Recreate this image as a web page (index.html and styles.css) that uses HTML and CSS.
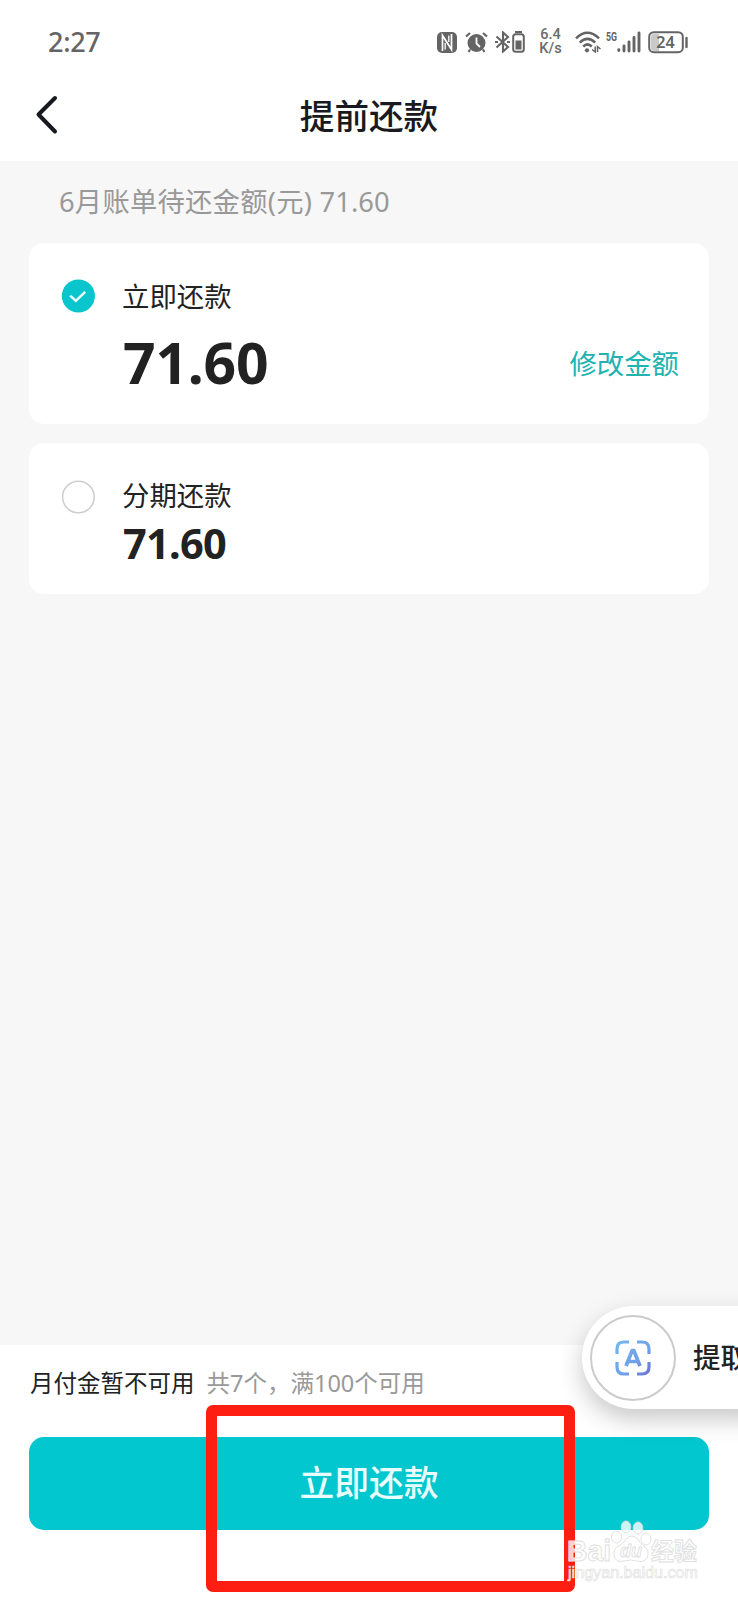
FILE: index.html
```html
<!DOCTYPE html>
<html lang="zh-CN">
<head>
<meta charset="utf-8">
<title>提前还款</title>
<link rel="stylesheet" href="styles.css">
</head>
<body>
<div class="screen">
  <div class="status">
    <span class="clock">2:27</span>
    <div class="indicators">
      <svg class="i-nfc" width="20" height="21" viewBox="0 0 20 21"><rect width="20" height="21" rx="5" fill="#646464"/><path d="M5.500 19V3.500L14.500 17.500V2" fill="none" stroke="#fff" stroke-width="1.700"/><path d="M8.200 17.500V11M11.800 3.500V10" stroke="#fff" stroke-width="1.300"/></svg>
      <svg class="i-alarm" width="23" height="21" viewBox="0 0 23 21"><circle cx="11.5" cy="11" r="9" fill="#646464"/><path d="M1 4.5L5 1M22 4.5L18 1M5 17.5L3.5 20M18 17.5L19.5 20" stroke="#646464" stroke-width="2.2"/><path d="M11.5 5.5V11.5L15 15" fill="none" stroke="#fff" stroke-width="1.8"/></svg>
      <svg class="i-bt" width="31" height="22" viewBox="0 0 31 22"><path d="M1.5 5.5L13 16L8 20.5V1.5L13 6L1.5 16.5" fill="none" stroke="#646464" stroke-width="2.100"/><path d="M0 11h3M12 11h3" stroke="#646464" stroke-width="2"/><rect x="18.2" y="3.2" width="10.600" height="17.500" rx="2.500" fill="none" stroke="#646464" stroke-width="2"/><path d="M20 1h7" stroke="#646464" stroke-width="2"/><rect x="20.5" y="9.5" width="6" height="9" fill="#646464"/></svg>
      <div class="speed"><span>6.4</span><span>K/s</span></div>
      <svg class="i-wifi" width="27" height="22" viewBox="0 0 27 22"><g fill="none" stroke="#646464" stroke-width="2.5"><path d="M1 7.3Q12.5-3.8 24 7.3"/><path d="M4.8 11.6Q12.5 4.2 20.2 11.6"/><path d="M8.2 15.5Q12.5 11.3 16.8 15.5"/></g><circle cx="12" cy="19.3" r="2.1" fill="#646464"/><path d="M20.2 15.5v5.5l-3-2.5M22.5 21v-5.5l3 2.5" fill="none" stroke="#646464" stroke-width="1.5"/></svg>
      <svg class="i-cell" width="35" height="22" viewBox="0 0 35 22"><text class="fiveg" x="0" y="9.5" textLength="11" lengthAdjust="spacingAndGlyphs">5G</text><path d="M12.8 18.600v1M18 15v5M23 11v9M28 6.5v13.5M33 2v18" stroke="#646464" stroke-width="2.9" stroke-linecap="round"/></svg>
      <svg class="i-batt" width="41" height="23" viewBox="0 0 41 23"><path d="M6 3h5v17H6Q3 20 3 17V6Q3 3 6 3Z" fill="#c9c9c9"/><rect x="1.2" y="1.2" width="33.6" height="20" rx="4.5" fill="none" stroke="#646464" stroke-width="2"/><path d="M38.5 7v9" stroke="#646464" stroke-width="2.4" stroke-linecap="round"/><text class="pct" x="8.2" y="17" textLength="18.500" lengthAdjust="spacingAndGlyphs">24</text></svg>
    </div>
  </div>
  <div class="titlebar">
    <svg class="back" width="24" height="40" viewBox="0 0 24 40"><path d="M21 3L4.500 19.5L21 36.5" fill="none" stroke="#171820" stroke-width="4" stroke-linecap="round" stroke-linejoin="round"/></svg>
    <h1 class="title">提前还款</h1>
  </div>
  <main class="content">
    <p class="summary">6月账单待还金额(元) <span class="sum-num">71.60</span></p>
    <section class="card card-now">
      <svg class="radio" width="34" height="34" viewBox="0 0 34 34"><circle cx="17.400" cy="17" r="16.600" fill="#0ac5cb"/><path d="M9.2 16.7L14.8 21.8L24.2 12.8" fill="none" stroke="#e9ffff" stroke-width="2.5"/></svg>
      <div class="plan">
        <span class="label">立即还款</span>
        <span class="amount big">71.60</span>
      </div>
      <a class="edit">修改金额</a>
    </section>
    <section class="card card-split">
      <svg class="radio" width="34" height="34" viewBox="0 0 34 34"><circle cx="17.400" cy="17" r="15.800" fill="#fff" stroke="#ccc" stroke-width="1.5"/></svg>
      <div class="plan">
        <span class="label">分期还款</span>
        <span class="amount small">71.60</span>
      </div>
    </section>
  </main>
  <footer class="footer">
    <p class="coupon"><span>月付金暂不可用</span><span class="hint">共7个，满100个可用</span></p>
    <button class="pay">立即还款</button>
  </footer>

  <div class="floating">
    <div class="scan">
      <svg width="36" height="36" viewBox="0 0 36 36"><defs><linearGradient id="g" gradientUnits="userSpaceOnUse" x1="0" y1="0" x2="36" y2="36"><stop offset="0" stop-color="#72b9ee"/><stop offset=".6" stop-color="#6f9fe8"/><stop offset="1" stop-color="#6d6fd4"/></linearGradient></defs><g fill="none" stroke="url(#g)" stroke-width="3.2"><path d="M2 14V9Q2 2 9 2H14M22 2H27Q34 2 34 9V14M34 22V27Q34 34 27 34H22M14 34H9Q2 34 2 27V22"/><path d="M11 26L17.200 10.500H18.800L25 26M13.5 21.5H22.5" stroke-width="3.700" stroke-linejoin="round"/></g></svg>
    </div>
    <span class="float-text">提取</span>
  </div>
  <div class="marker"></div>
  <svg class="watermark" width="140" height="66" viewBox="0 0 140 66">
    <g fill="#fff" fill-opacity=".8" stroke="#dedede" stroke-width=".9">
      <text class="wm-bai" x="1" y="41" textLength="44" lengthAdjust="spacingAndGlyphs">Bai</text>
      <ellipse cx="50.500" cy="17" rx="5" ry="6"/><ellipse cx="60" cy="7" rx="4.800" ry="6"/><ellipse cx="72" cy="8" rx="4.800" ry="6"/><ellipse cx="80" cy="19" rx="5" ry="6"/>
      <path d="M48 35Q47 28 54 25Q59 22 60 19Q65 13 72 19Q74 24 79 27Q84 31 81 38Q78 43 71 41Q65 39 58 41Q49 43 48 35Z"/>
      <text class="wm-du" x="54" y="37" textLength="22" lengthAdjust="spacingAndGlyphs">du</text>
      <text class="wm-cn" x="85" y="40" textLength="46" lengthAdjust="spacingAndGlyphs">经验</text>
    </g>
    <text class="wm-url" x="2" y="58" textLength="130" lengthAdjust="spacingAndGlyphs">jingyan.baidu.com</text>
  </svg>
</div>
</body>
</html>
```
FILE: styles.css
```css
* { box-sizing: border-box; }
body {
  margin: 0;
  font-family: "Noto Sans", "Noto Sans CJK SC", sans-serif;
  color: #222;
}
h1, p { margin: 0; font-weight: 400; }
svg { display: block; flex: none; }
.screen {
  position: relative;
  width: 738px;
  height: 1600px;
  overflow: hidden;
  display: flex;
  flex-direction: column;
  background: #fff;
}
.status {
  height: 84px;
  padding: 0 49px 0 48px;
  display: flex;
  align-items: center;
  justify-content: space-between;
}
.clock {
  font-size: 27px;
  font-weight: 500;
  line-height: 40px;
  color: #646464;
  letter-spacing: -.3px;
}
.indicators { display: flex; align-items: center; }
.i-alarm { margin-left: 8px; }
.i-bt { margin-left: 7px; }
.speed {
  width: 25px;
  margin-left: 12px;
  display: flex;
  flex-direction: column;
  align-items: center;
  font: 500 14.5px/14.5px Roboto, sans-serif;
  color: #6a6a6a;
}
.i-wifi { margin-left: 12px; }
.i-cell { margin-left: 4px; }
.i-batt { margin-left: 7px; }
.fiveg { font: 700 12px Roboto, sans-serif; fill: #646464; }
.pct { font: 600 16px "Noto Sans", sans-serif; fill: #646464; }
.titlebar {
  height: 77px;
  padding: 0 34px;
  display: grid;
  grid-template-columns: 24px 1fr 24px;
  align-items: start;
}
.back { margin-top: 11px; }
.title {
  text-align: center;
  font: 500 34.6px/60px "Noto Sans CJK SC", sans-serif;
  color: #191a20;
}
.content {
  height: 1184px;
  padding: 0 29px;
  background: #f7f7f7;
  display: flex;
  flex-direction: column;
}
.summary {
  height: 82px;
  padding-left: 30px;
  font-size: 27.3px;
  line-height: 82px;
  color: #999;
  letter-spacing: .25px;
  white-space: nowrap;
}
.sum-num { letter-spacing: .1px; }
.card {
  background: #fff;
  border-radius: 15px;
  padding-left: 32px;
  padding-right: 30px;
  display: flex;
  align-items: flex-start;
}
.card-now { height: 181px; padding-top: 36px; }
.card-split { height: 151px; margin-top: 19px; padding-top: 37px; }
.plan {
  flex: 1;
  margin-left: 27px;
  display: flex;
  flex-direction: column;
}
.label { font-size: 27.4px; line-height: 36px; }
.card-split .label { margin-top: -2px; }
.amount { font-weight: 700; margin-left: 1px; }
.big { font-size: 57px; line-height: 66px; margin-top: 14px; letter-spacing: -.2px; }
.small { font-size: 41.500px; line-height: 50px; margin-top: 4px; letter-spacing: -.7px; }
.edit {
  margin-top: 67px;
  font-size: 27.4px;
  line-height: 36px;
  color: #20b3b1;
}
.footer {
  flex: 1;
  padding: 20px 29px 0;
  display: flex;
  flex-direction: column;
}
.coupon {
  height: 72px;
  padding-left: 1px;
  display: flex;
  gap: 12px;
  font-size: 23.5px;
  line-height: 36px;
}
.hint { color: #999; }
.pay {
  height: 93px;
  padding: 0 0 5px;
  border: 0;
  border-radius: 15px;
  background: #02c7ce;
  color: #e9ffff;
  font: 500 34.8px/88px "Noto Sans CJK SC", sans-serif;
}
.floating {
  position: absolute;
  left: 582px;
  top: 1306px;
  width: 220px;
  height: 103px;
  padding-left: 8px;
  border-radius: 52px;
  background: #fff;
  box-shadow: 0 10px 24px rgba(0, 0, 0, .22);
  display: flex;
  align-items: center;
}
.scan {
  width: 86px;
  height: 86px;
  border: 2px solid #cbcbcb;
  border-radius: 50%;
  display: flex;
  align-items: center;
  justify-content: center;
}
.float-text {
  margin-left: 17px;
  padding-bottom: 3px;
  font: 500 27.5px/40px "Noto Sans CJK SC", sans-serif;
}
.marker {
  position: absolute;
  left: 206px;
  top: 1405px;
  width: 369px;
  height: 187px;
  border: 11px solid #ff1f12;
  border-radius: 7px;
}
.watermark { position: absolute; left: 566px; top: 1520px; }
.wm-bai { font: 700 29px "Liberation Sans", sans-serif; }
.wm-du { font: italic 700 19px "Liberation Sans", sans-serif; }
.wm-cn { font: 700 24px "Noto Sans CJK SC", sans-serif; }
.wm-url {
  font: 400 16px "Liberation Sans", sans-serif;
  fill: #fff;
  fill-opacity: .85;
  stroke: #dedede;
  stroke-width: .6px;
}
```
